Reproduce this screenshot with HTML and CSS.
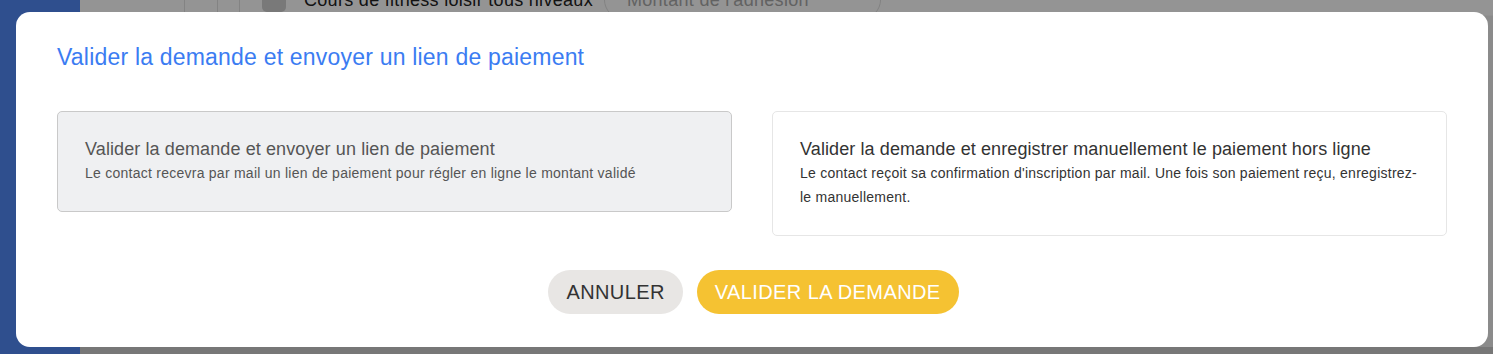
FILE: index.html
```html
<!DOCTYPE html>
<html lang="fr">
<head>
    <meta charset="UTF-8">
    <meta name="viewport" content="width=device-width, initial-scale=1.0">
    <title>Valider la demande</title>
    <link rel="stylesheet" href="styles.css">
</head>
<body>
    <div class="page">
        <div class="sidebar"></div>
        <div class="main">
            <div class="row">
                <div class="cell cell-a"></div>
                <div class="cell cell-b"></div>
                <div class="cell cell-c"></div>
                <div class="cell cell-d">
                    <span class="checkbox"></span>
                    <span class="row-label">Cours de fitness loisir tous niveaux</span>
                    <span class="amount">Montant de l'adhésion</span>
                </div>
            </div>
        </div>
    </div>

    <div class="backdrop">
        <div class="modal">
            <h2 class="modal-title">Valider la demande et envoyer un lien de paiement</h2>
            <div class="options">
                <div class="option selected">
                    <div class="option-title">Valider la demande et envoyer un lien de paiement</div>
                    <div class="option-text">Le contact recevra par mail un lien de paiement pour régler en ligne le montant validé</div>
                </div>
                <div class="option">
                    <div class="option-title">Valider la demande et enregistrer manuellement le paiement hors ligne</div>
                    <div class="option-text">Le contact reçoit sa confirmation d'inscription par mail. Une fois son paiement reçu, enregistrez-le manuellement.</div>
                </div>
            </div>
            <div class="actions">
                <button type="button" class="btn btn-cancel">Annuler</button>
                <button type="button" class="btn btn-confirm">Valider la demande</button>
            </div>
        </div>
    </div>
</body>
</html>
```

FILE: styles.css
```css
body {
    font-family: 'Liberation Sans', Arial, sans-serif;
    margin: 0;
    padding: 0;
    height: 100vh;
    overflow: hidden;
    background-color: #fff;
}
.page {
    display: flex;
    height: 100%;
}
.sidebar {
    width: 80px;
    flex-shrink: 0;
    background-color: #5188f5;
}
.main {
    flex: 1;
    display: flex;
    flex-direction: column;
    background-color: #efefef;
    border-bottom: 7px solid #cdcdcd;
}
.row {
    display: flex;
    height: 30px;
    margin-top: -15px;
    border-bottom: 1px solid #f8f8f8;
    background-color: #fff;
}
.cell {
    border-right: 1px solid #e2e2e2;
}
.cell-a {
    width: 104px;
}
.cell-b {
    width: 32px;
}
.cell-c {
    width: 21px;
}
.cell-d {
    flex: 1;
    display: flex;
    align-items: center;
    padding-left: 22px;
    border-right: none;
}
.checkbox {
    width: 24px;
    height: 24px;
    border-radius: 5px;
    background-color: #d0d0d0;
}
.row-label {
    margin-left: 18px;
    font-size: 18px;
    letter-spacing: 0.3px;
    color: #222;
}
.amount {
    margin-left: 11px;
    padding: 0 22px;
    height: 38px;
    box-sizing: border-box;
    display: flex;
    align-items: center;
    border: 1px solid #e0e0e0;
    border-radius: 19px;
    font-size: 18px;
    letter-spacing: 0.3px;
    color: #aaa;
    width: 277px;
}
.backdrop {
    position: fixed;
    inset: 0;
    background-color: rgba(0, 0, 0, 0.42);
    padding: 12px 5px 7px 16px;
    box-sizing: border-box;
}
.modal {
    height: 100%;
    box-sizing: border-box;
    background-color: #fff;
    border-radius: 14px;
    padding: 32px 41px 33px;
    display: flex;
    flex-direction: column;
}
.modal-title {
    margin: 0 0 40px;
    font-size: 23px;
    letter-spacing: 0.2px;
    font-weight: normal;
    color: #3b7cf2;
}
.options {
    display: flex;
    align-items: flex-start;
    gap: 40px;
}
.option {
    flex: 1;
    padding: 27px 27px 26px;
    border: 1px solid #e6e6e6;
    border-radius: 5px;
    background-color: #fff;
    color: #333;
}
.option.selected {
    background-color: #eff0f2;
    border-color: #c9c9c9;
    color: #555;
}
.option-title {
    font-size: 18px;
    letter-spacing: 0.1px;
    margin-bottom: 1px;
}
.option-text {
    font-size: 14px;
    letter-spacing: 0.25px;
    line-height: 24px;
}
.actions {
    margin-top: auto;
    display: flex;
    justify-content: center;
    gap: 14px;
    padding-left: 3px;
}
.btn {
    height: 44px;
    padding: 0 18px;
    border: none;
    border-radius: 22px;
    font-family: inherit;
    font-size: 20px;
    letter-spacing: 0.4px;
    text-transform: uppercase;
    cursor: pointer;
}
.btn-cancel {
    background-color: #e8e6e4;
    color: #333;
}
.btn-confirm {
    background-color: #f5c232;
    color: #fff;
}
```
